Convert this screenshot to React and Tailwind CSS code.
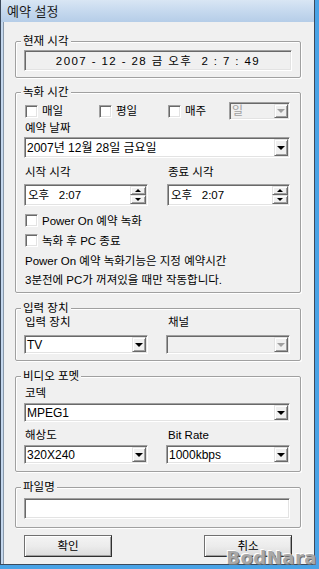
import React from "react";

const sunken =
  "border border-t-[#a0a0a0] border-l-[#a0a0a0] border-r-white border-b-white shadow-[inset_1px_1px_0_#696969,inset_-1px_-1px_0_#e3e3e3]";
const raised =
  "bg-[#f0f0f0] border border-t-[#e3e3e3] border-l-[#e3e3e3] border-r-[#696969] border-b-[#696969] shadow-[inset_1px_1px_0_#fff,inset_-1px_-1px_0_#a0a0a0]";

const DownArrow = ({ disabled }) => (
  <div
    className={`w-0 h-0 border-l-[4px] border-r-[4px] border-t-[4px] border-l-transparent border-r-transparent ${
      disabled ? "border-t-[#a0a0a0]" : "border-t-black"
    }`}
  />
);

const Check = ({ label, className = "" }) => (
  <div className={`flex items-center gap-[4px] h-[13px] ${className}`}>
    <div className={`w-[13px] h-[13px] bg-white shrink-0 ${sunken}`} />
    <span className="leading-[12px] whitespace-nowrap">{label}</span>
  </div>
);

// combo box / drop down list
const Combo = ({ value, className = "", disabled }) => (
  <div
    className={`flex items-stretch p-[1px] ${sunken} ${
      disabled ? "bg-[#f0f0f0] text-[#a0a0a0]" : "bg-white"
    } ${className}`}
  >
    <span className="flex-1 flex items-center pl-[1px] leading-[12px] text-[12px] whitespace-pre overflow-hidden">
      {value}
    </span>
    <div className={`w-[14px] flex items-center justify-center ${raised}`}>
      <DownArrow disabled={disabled} />
    </div>
  </div>
);

const Spin = ({ value, className = "" }) => (
  <div className={`flex items-stretch p-[1px] bg-white ${sunken} ${className}`}>
    <span className="flex-1 flex items-center pl-[2px] leading-[12px] whitespace-pre">
      {value}
    </span>
    <div className="w-[16px] flex flex-col">
      <div className={`flex-1 flex items-center justify-center ${raised}`}>
        <div className="w-0 h-0 border-l-[3px] border-r-[3px] border-b-[3px] border-l-transparent border-r-transparent border-b-black" />
      </div>
      <div className={`flex-1 flex items-center justify-center ${raised}`}>
        <div className="w-0 h-0 border-l-[3px] border-r-[3px] border-t-[3px] border-l-transparent border-r-transparent border-t-black" />
      </div>
    </div>
  </div>
);

const Group = ({ title, className = "", children }) => (
  <div
    className={`w-[286px] border border-[#a0a0a0] rounded-[2px] shadow-[inset_1px_1px_0_#fff,1px_1px_0_#fff] ${className}`}
  >
    <div className="-mt-[7px] ml-[5px] w-fit h-[12px] px-[2px] bg-[#f0f0f0] leading-[12px]">
      {title}
    </div>
    {children}
  </div>
);

const Button = ({ label }) => (
  <div className="w-[88px] h-[22px] flex items-center justify-center border border-[#707070] border-r-[#303030] border-b-[#303030] bg-gradient-to-b from-[#f4f4f4] via-[#ececec] to-[#dcdcdc] shadow-[inset_1px_1px_0_#fff,inset_-1px_-1px_0_#a0a0a0] leading-[12px]">
    {label}
  </div>
);

export default function App() {
  return (
    <div className="relative w-[319px] h-[569px] flex flex-col bg-[#49a3e6] text-[11.5px] text-black font-['Liberation_Sans','Noto_Sans_CJK_KR',sans-serif] overflow-hidden">
      <div className="h-[565px] flex">
        <div className="w-[1px] bg-[#3c4a5c]" />
        <div className="flex-1 flex flex-col bg-[#c4d7ed] border-b border-[#3c4a5c]">
          {/* title bar */}
          <div className="h-[22px] flex items-center pl-[6px] bg-gradient-to-b from-[#d9e6f4] via-[#c6d9ee] to-[#b5cde8]">
            <span className="text-[13px] leading-[13px] text-[#1a1a1a]">예약 설정</span>
          </div>

          {/* body */}
          <div className="flex-1 ml-[2px] border-l border-[#8a9aab] bg-[#f0f0f0] flex flex-col pl-[11px]">
            <Group title="현재 시각" className="mt-[19px]">
              <div
                className={`mt-[3px] ml-[8px] w-[268px] h-[21px] flex items-center justify-center whitespace-pre tracking-[1.4px] leading-[12px] bg-[#f0f0f0] ${sunken}`}
              >
                2007 - 12 - 28 금 오후  2 : 7 : 49
              </div>
              <div className="h-[6px]" />
            </Group>

            <Group title="녹화 시간" className="mt-[14px]">
              <div className="mt-[4px] ml-[9px] h-[18px] flex items-center">
                <Check label="매일" className="w-[74px]" />
                <Check label="평일" className="w-[69px]" />
                <Check label="매주" className="w-[61px]" />
                <Combo value="일" disabled className="w-[61px] h-[18px]" />
              </div>
              <div className="mt-[2px] ml-[9px] h-[12px] leading-[12px]">예약 날짜</div>
              <Combo
                value="2007년 12월 28일 금요일"
                className="mt-[3px] ml-[8px] w-[266px] h-[21px]"
              />
              <div className="mt-[8px] ml-[9px] h-[12px] leading-[12px] flex">
                <span className="w-[143px]">시작 시각</span>
                <span>종료 시각</span>
              </div>
              <div className="mt-[6px] ml-[8px] flex gap-[19px]">
                <Spin value="오후   2:07" className="w-[124px] h-[22px]" />
                <Spin value="오후   2:07" className="w-[123px] h-[22px]" />
              </div>
              <Check label="Power On 예약 녹화" className="mt-[8px] ml-[9px]" />
              <Check label="녹화 후 PC 종료" className="mt-[7px] ml-[9px]" />
              <div className="mt-[5px] ml-[9px] leading-[19px]">
                <div>Power On 예약 녹화기능은 지정 예약시간</div>
                <div>3분전에 PC가 꺼져있을 때만 작동합니다.</div>
              </div>
              <div className="h-[2px]" />
            </Group>

            <Group title="입력 장치" className="mt-[15px]">
              <div className="mt-[2px] ml-[9px] h-[12px] leading-[12px] flex">
                <span className="w-[143px]">입력 장치</span>
                <span>채널</span>
              </div>
              <div className="mt-[7px] ml-[8px] flex gap-[18px]">
                <Combo value="TV" className="w-[124px] h-[19px]" />
                <Combo value="" disabled className="w-[124px] h-[19px]" />
              </div>
              <div className="h-[6px]" />
            </Group>

            <Group title="비디오 포멧" className="mt-[15px]">
              <div className="mt-[5px] ml-[9px] h-[12px] leading-[12px]">코덱</div>
              <Combo value="MPEG1" className="mt-[4px] ml-[8px] w-[266px] h-[19px]" />
              <div className="mt-[7px] ml-[9px] h-[12px] leading-[12px] flex">
                <span className="w-[143px]">해상도</span>
                <span>Bit Rate</span>
              </div>
              <div className="mt-[4px] ml-[8px] flex gap-[18px]">
                <Combo value="320X240" className="w-[124px] h-[19px]" />
                <Combo value="1000kbps" className="w-[124px] h-[19px]" />
              </div>
              <div className="h-[7px]" />
            </Group>

            <Group title="파일명" className="mt-[15px]">
              <div className={`mt-[5px] ml-[8px] w-[266px] h-[21px] bg-white ${sunken}`} />
              <div className="h-[8px]" />
            </Group>

            <div className="mt-[7px] ml-[9px] flex gap-[92px]">
              <Button label="확인" />
              <Button label="취소" />
            </div>
          </div>
        </div>
        <div className="w-[1px] bg-[#3c4a5c]" />
        <div className="w-[4px] bg-[#49a3e6]" />
      </div>

      {/* watermark */}
      <div className="absolute right-[2px] bottom-[2px] text-[18px] leading-[18px] font-black tracking-[0.5px] text-[#a8a8a8] [text-shadow:1px_1px_0_#6e6e6e,-1px_-1px_0_#ffffff] font-['DejaVu_Sans',sans-serif]">
        BodNara
      </div>
    </div>
  );
}
